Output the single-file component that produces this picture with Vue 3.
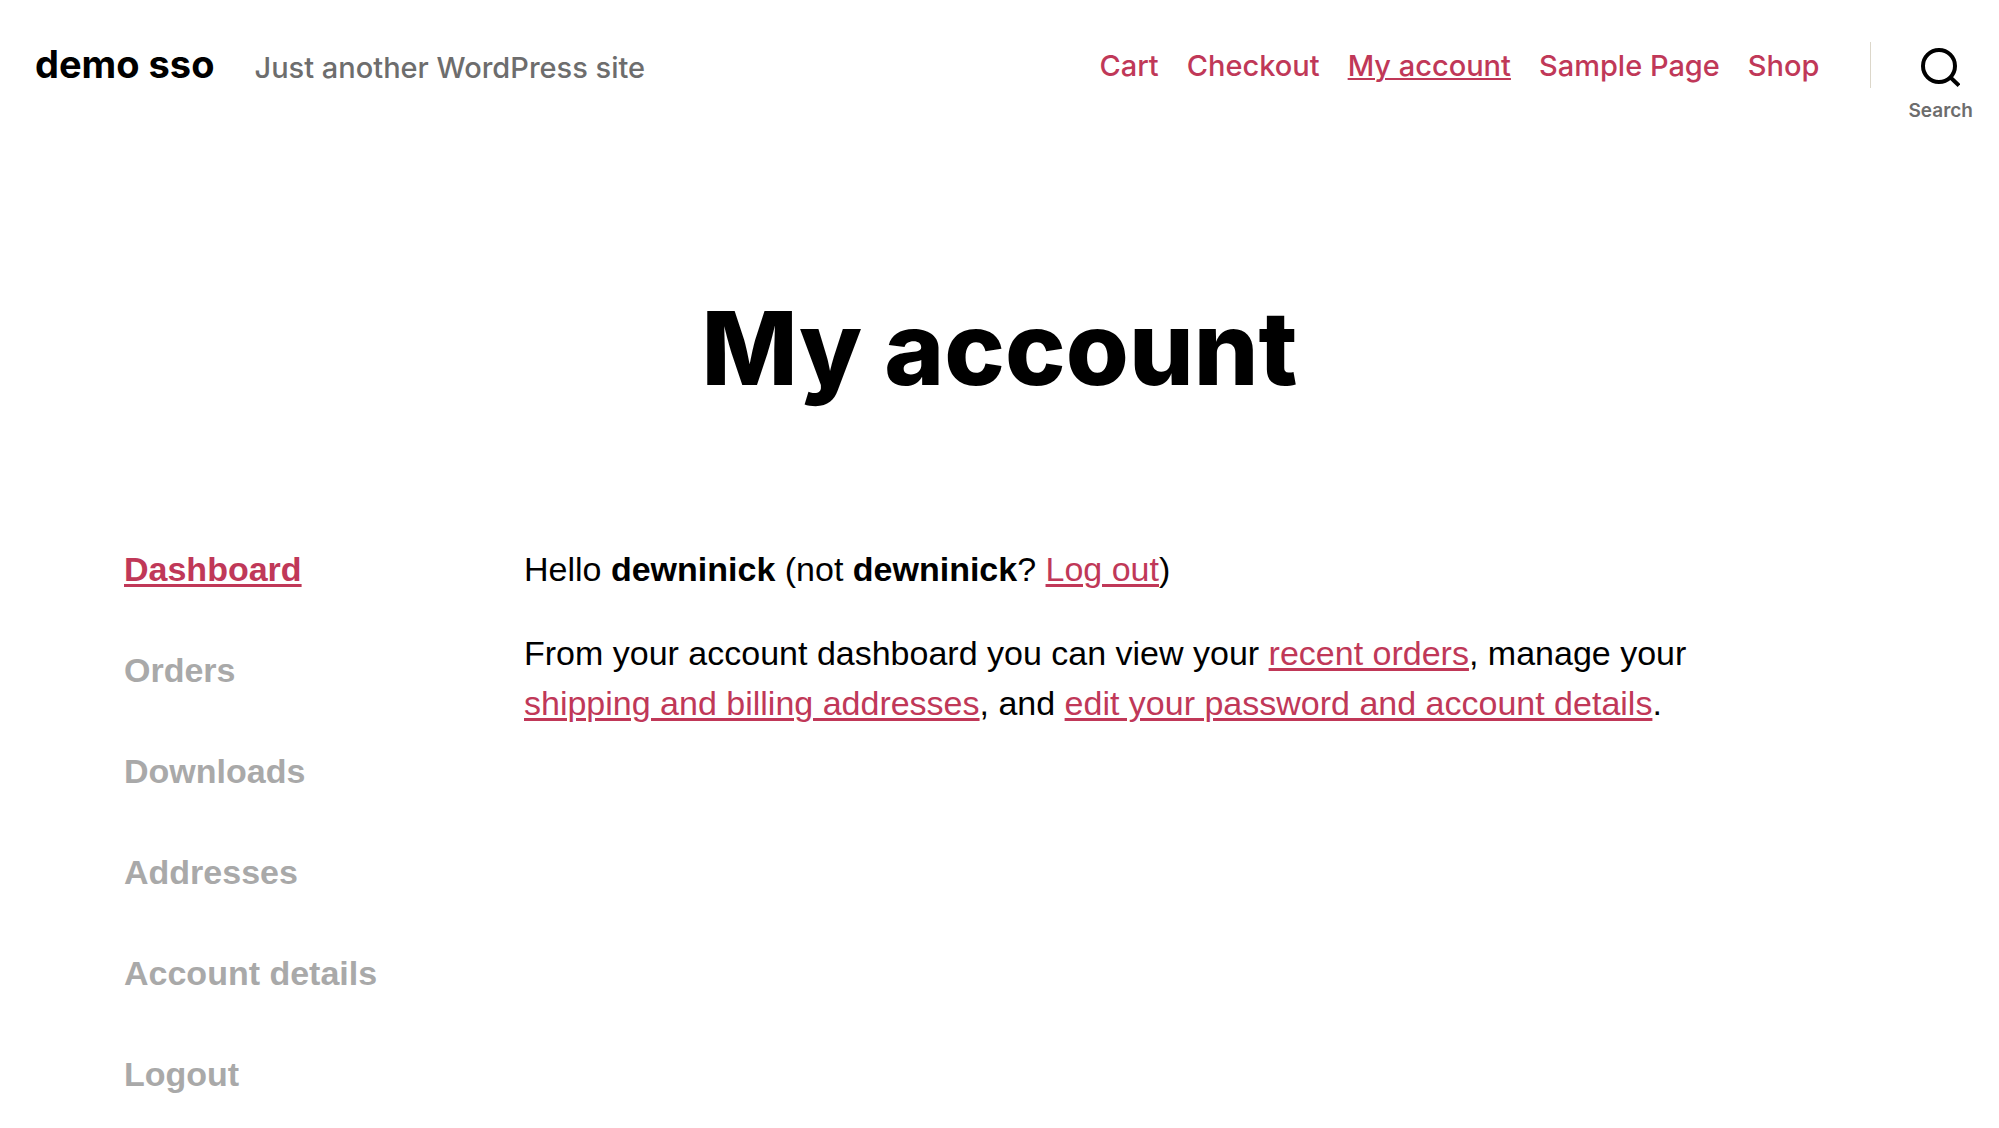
<script setup>
const pages = [
  { label: 'Cart' },
  { label: 'Checkout' },
  { label: 'My account', current: true },
  { label: 'Sample Page' },
  { label: 'Shop' },
]

const accountLinks = [
  { label: 'Dashboard', current: true },
  { label: 'Orders' },
  { label: 'Downloads' },
  { label: 'Addresses' },
  { label: 'Account details' },
  { label: 'Logout' },
]
</script>

<template>
  <div class="page">
    <header class="site-header">
      <div class="branding">
        <a class="site-title" href="#">demo sso</a>
        <span class="tagline">Just another WordPress site</span>
      </div>
      <nav class="primary-nav" aria-label="Primary">
        <ul>
          <li v-for="page in pages" :key="page.label">
            <a href="#" :class="{ current: page.current }">{{ page.label }}</a>
          </li>
        </ul>
      </nav>
      <div class="search-area">
        <button class="search-toggle" type="button">
          <svg width="39" height="39" viewBox="0 0 39 39" fill="none" stroke="#000" stroke-width="4" aria-hidden="true">
            <circle cx="18" cy="18" r="16" />
            <path d="M28.5 28.5 38 37.5" />
          </svg>
          <span>Search</span>
        </button>
      </div>
    </header>

    <main>
      <h1>My account</h1>
      <div class="account">
        <nav class="account-nav" aria-label="Account pages">
          <ul>
            <li v-for="link in accountLinks" :key="link.label">
              <a href="#" :class="{ current: link.current }">{{ link.label }}</a>
            </li>
          </ul>
        </nav>
        <section class="account-content">
          <p>Hello <strong>dewninick</strong> (not <strong>dewninick</strong>? <a href="#">Log out</a>)</p>
          <p>
            From your account dashboard you can view your <a href="#">recent orders</a>, manage your
            <a href="#">shipping and billing addresses</a>, and
            <a href="#">edit your password and account details</a>.
          </p>
        </section>
      </div>
    </main>
  </div>
</template>

<style>
body {
  margin: 0;
  background: #fff;
}
</style>

<style scoped>
.page {
  color: #000;
  font-family: Inter, "Liberation Sans", sans-serif;
}

ul {
  margin: 0;
  padding: 0;
  list-style: none;
}

.site-header {
  display: flex;
  align-items: flex-start;
  padding: 42px 26px 0 35px;
}

.branding {
  display: flex;
  align-items: baseline;
  gap: 40px;
  margin-right: auto;
  line-height: 44px;
  white-space: nowrap;
}

.site-title {
  color: #000;
  font-size: 38px;
  font-weight: 700;
  text-decoration: none;
}

.tagline {
  color: #6d6d6d;
  font-size: 29px;
  font-weight: 500;
}

.primary-nav ul {
  display: flex;
  gap: 28px;
}

.primary-nav a {
  color: #c03858;
  font-size: 29px;
  font-weight: 500;
  line-height: 48px;
  text-decoration: none;
  white-space: nowrap;
}

.primary-nav a.current {
  text-decoration: underline 2px;
  text-underline-offset: 2px;
}

.search-area {
  margin-left: 51px;
  padding-left: 38px;
  background: linear-gradient(#dcd7ca, #dcd7ca) left top / 1px 46px no-repeat;
}

.search-toggle {
  display: flex;
  flex-direction: column;
  align-items: center;
  gap: 12px;
  padding: 6px 0 0;
  border: 0;
  background: none;
  color: #6d6d6d;
  font-family: inherit;
  font-size: 19px;
  font-weight: 600;
  line-height: 24px;
}

.search-toggle svg {
  display: block;
}

h1 {
  margin: 163px 0 0;
  font-size: 102px;
  font-weight: 800;
  line-height: 124px;
  text-align: center;
}

.account {
  display: flex;
  margin: 134px 124px 0;
  font-family: "Liberation Sans", sans-serif;
  font-size: 34px;
  line-height: 50px;
}

.account a {
  text-decoration-thickness: 3px;
  text-underline-offset: 3px;
}

.account-nav {
  flex: 0 0 400px;
}

.account-nav ul {
  display: flex;
  flex-direction: column;
  gap: 51px;
}

.account-nav a {
  color: #a9a9a9;
  font-weight: 700;
  text-decoration-line: none;
}

.account-nav a.current {
  color: #c03858;
  text-decoration-line: underline;
}

.account-content {
  flex: 1;
  max-width: 1240px;
}

.account-content p {
  margin: 0 0 34px;
}

.account-content a {
  color: #c03858;
}
</style>
